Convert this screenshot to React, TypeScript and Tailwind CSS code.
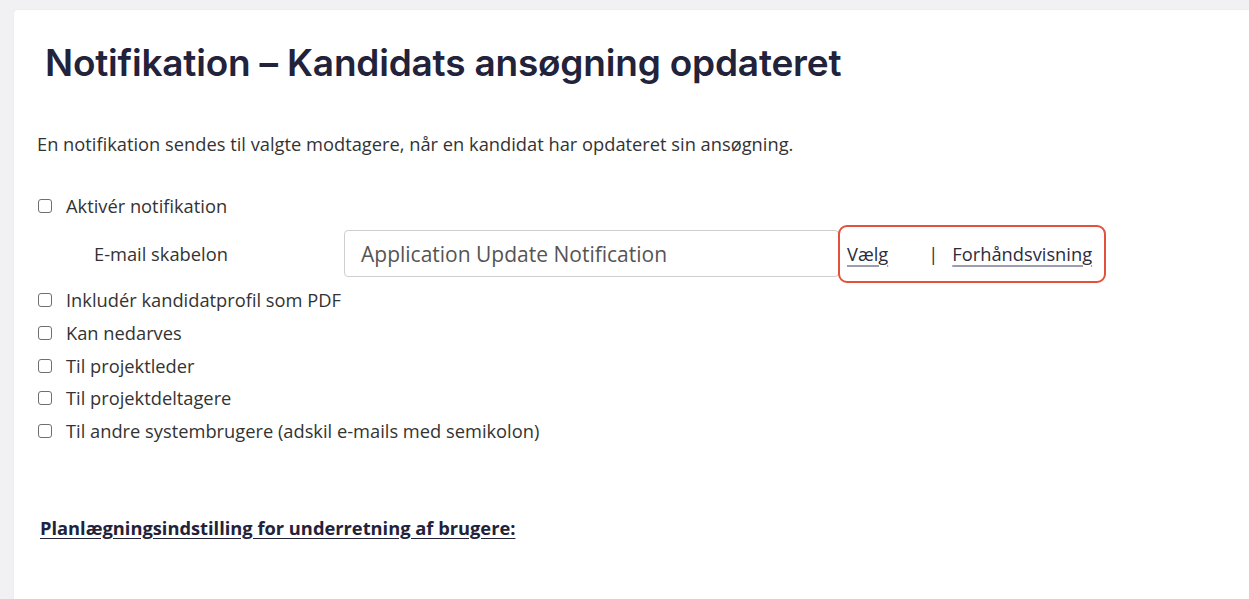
import React from "react"

type Row = { label: string }

const rows: Row[] = [
    { label: "Inkludér kandidatprofil som PDF" },
    { label: "Kan nedarves" },
    { label: "Til projektleder" },
    { label: "Til projektdeltagere" },
    { label: "Til andre systembrugere (adskil e-mails med semikolon)" },
]

function Boks({ label }: Row) {
    return (
        <label className="flex items-center h-[32.75px] gap-[14px] cursor-pointer">
            <span className="w-[14px] h-[14px] -ml-[1px] border border-[#6f6f6f] rounded-[3px] bg-white shrink-0" />
            <span>{label}</span>
        </label>
    )
}

export default function App() {
    return (
        <div className="min-h-screen bg-[#f1f1f3] pl-[14px] pt-[10px] overflow-hidden" style={{ fontFamily: "'Open Sans', sans-serif" }}>
            <div className="bg-white rounded-tl-[4px] min-h-[589px] pl-[25px] pt-[30px] text-[#333333] text-[18.3px] leading-[24px] shadow-[0_0_2px_rgba(0,0,0,0.06)]">
                <h1 className="pl-[6px] text-[37px] font-semibold text-[#22223a] leading-[46px] tracking-[-0.2px]" style={{ fontFamily: "Inter, sans-serif" }}>
                    Notifikation – Kandidats ansøgning opdateret
                </h1>

                <p className="mt-[46px] -ml-[2px]">
                    En notifikation sendes til valgte modtagere, når en kandidat har opdateret sin ansøgning.
                </p>

                <div className="mt-[34px]">
                    <Boks label="Aktivér notifikation" />

                    <div className="flex items-center h-[60px] mt-[1px]">
                        <div className="w-[305px] pl-[55px]">E-mail skabelon</div>
                        <div className="w-[495px] h-[47px] border border-[#cfcfcf] rounded-[4px] flex items-center px-[16px] text-[21px] text-[#555555]">
                            Application Update Notification
                        </div>
                        <div className="h-[58px] -ml-[1px] border-2 border-[#e2513a] rounded-[9px] flex items-center pl-[7px] pr-[12px] text-[#2c2c3c]">
                            <a href="#" className="underline decoration-[#9c9cb0] underline-offset-[4px] decoration-[1.5px]">Vælg</a>
                            <span className="ml-[40px] mr-[14px]">|</span>
                            <a href="#" className="underline decoration-[#9c9cb0] underline-offset-[4px] decoration-[1.5px]">Forhåndsvisning</a>
                        </div>
                    </div>

                    {rows.map((r) => <Boks key={r.label} label={r.label} />)}
                </div>

                <div className="mt-[68px] pl-[1px] font-bold text-[#22223a] underline underline-offset-[3px]">
                    Planlægningsindstilling for underretning af brugere:
                </div>
            </div>
        </div>
    )
}
